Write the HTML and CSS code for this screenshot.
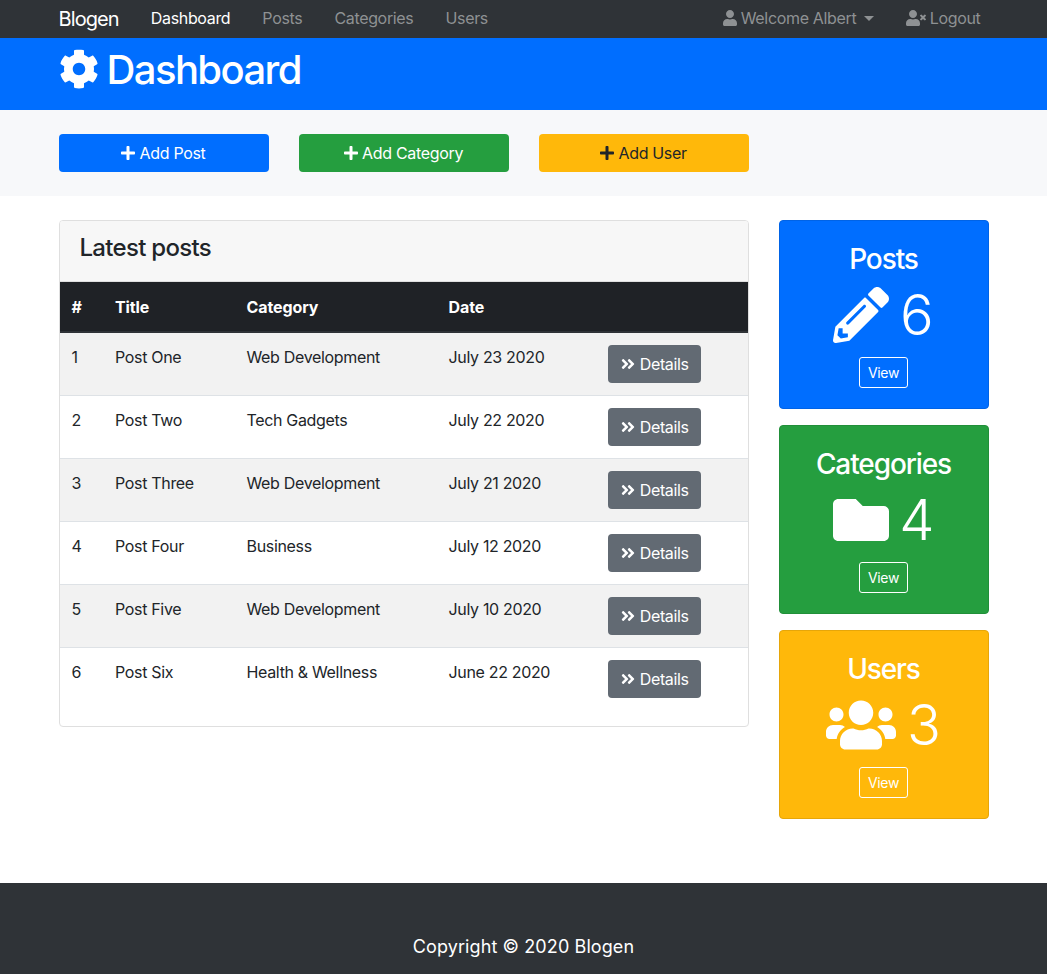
FILE: index.html
```html
<!DOCTYPE html>
<html lang="en">
<head>
  <meta charset="UTF-8">
  <meta name="viewport" content="width=device-width, initial-scale=1.0">
  <title>Blogen - Dashboard</title>
  <link rel="stylesheet" href="styles.css">
</head>
<body>
  <svg class="icon-defs" xmlns="http://www.w3.org/2000/svg">
    <symbol id="i-cog" viewBox="0 0 512 512"><path d="M487.4 315.7l-42.6-24.6c4.3-23.2 4.3-47 0-70.2l42.6-24.6c4.9-2.8 7.1-8.6 5.5-14-11.1-35.6-30-67.8-54.7-94.6-3.8-4.1-10-5.1-14.8-2.3L380.8 110c-17.9-15.4-38.5-27.3-60.8-35.1V25.8c0-5.6-3.9-10.5-9.4-11.7-36.7-8.2-74.3-7.8-109.2 0-5.5 1.2-9.4 6.1-9.4 11.7V75c-22.2 7.9-42.8 19.8-60.8 35.1L88.7 85.5c-4.9-2.8-11-1.9-14.8 2.3-24.7 26.7-43.6 58.9-54.7 94.6-1.7 5.4.6 11.2 5.5 14L67.3 221c-4.3 23.2-4.3 47 0 70.2l-42.6 24.6c-4.9 2.8-7.1 8.6-5.5 14 11.1 35.6 30 67.8 54.7 94.6 3.8 4.1 10 5.1 14.8 2.3l42.6-24.6c17.9 15.4 38.5 27.3 60.8 35.1v49.2c0 5.6 3.9 10.5 9.4 11.7 36.7 8.2 74.3 7.8 109.2 0 5.5-1.2 9.4-6.1 9.4-11.7v-49.2c22.2-7.9 42.8-19.8 60.8-35.1l42.6 24.6c4.9 2.8 11 1.9 14.8-2.3 24.7-26.7 43.6-58.9 54.7-94.6 1.5-5.5-.7-11.3-5.6-14.1zM256 336c-44.1 0-80-35.9-80-80s35.9-80 80-80 80 35.9 80 80-35.9 80-80 80z"/></symbol>
    <symbol id="i-plus" viewBox="0 0 448 512"><path d="M416 208H272V64c0-17.67-14.33-32-32-32h-32c-17.67 0-32 14.33-32 32v144H32c-17.67 0-32 14.33-32 32v32c0 17.67 14.33 32 32 32h144v144c0 17.67 14.33 32 32 32h32c17.67 0 32-14.33 32-32V304h144c17.67 0 32-14.33 32-32v-32c0-17.67-14.33-32-32-32z"/></symbol>
    <symbol id="i-user" viewBox="0 0 448 512"><path d="M224 256c70.7 0 128-57.3 128-128S294.7 0 224 0 96 57.3 96 128s57.3 128 128 128zm89.6 32h-16.7c-22.2 10.2-46.9 16-72.9 16s-50.6-5.8-72.9-16h-16.7C60.2 288 0 348.2 0 422.4V464c0 26.5 21.5 48 48 48h352c26.5 0 48-21.5 48-48v-41.6c0-74.2-60.2-134.4-134.4-134.4z"/></symbol>
    <symbol id="i-user-times" viewBox="0 0 640 512"><path d="M589.6 240l45.6-45.6c6.3-6.3 6.3-16.5 0-22.8l-22.8-22.8c-6.3-6.3-16.5-6.3-22.8 0L544 194.4l-45.6-45.6c-6.3-6.3-16.5-6.3-22.8 0l-22.8 22.8c-6.3 6.3-6.3 16.5 0 22.8l45.6 45.6-45.6 45.6c-6.3 6.3-6.3 16.5 0 22.8l22.8 22.8c6.3 6.3 16.5 6.3 22.8 0l45.6-45.6 45.6 45.6c6.3 6.3 16.5 6.3 22.8 0l22.8-22.8c6.3-6.3 6.3-16.5 0-22.8L589.6 240zM224 256c70.7 0 128-57.3 128-128S294.7 0 224 0 96 57.3 96 128s57.3 128 128 128zm89.6 32h-16.7c-22.2 10.2-46.9 16-72.9 16s-50.6-5.8-72.9-16h-16.7C60.2 288 0 348.2 0 422.4V464c0 26.5 21.5 48 48 48h352c26.5 0 48-21.5 48-48v-41.6c0-74.2-60.2-134.4-134.4-134.4z"/></symbol>
    <symbol id="i-pencil" viewBox="0 0 512 512"><path d="M497.9 142.1l-46.1 46.1c-4.7 4.7-12.3 4.7-17 0l-111-111c-4.7-4.7-4.7-12.3 0-17l46.1-46.1c18.7-18.7 49.1-18.7 67.9 0l60.1 60.1c18.8 18.7 18.8 49.1 0 67.9zM284.2 99.8L21.6 362.4.4 483.9c-2.9 16.4 11.4 30.6 27.8 27.8l121.5-21.3 262.6-262.6c4.7-4.7 4.7-12.3 0-17l-111-111c-4.8-4.7-12.4-4.7-17.1 0zM124.1 339.9c-5.5-5.5-5.5-14.3 0-19.8l154-154c5.5-5.5 14.3-5.5 19.8 0s5.5 14.3 0 19.8l-154 154c-5.5 5.5-14.3 5.5-19.8 0zM88 424h48v36.3l-64.5 11.3-31.1-31.1L51.7 376H88v48z"/></symbol>
    <symbol id="i-folder" viewBox="0 0 512 512"><path d="M464 128H272l-64-64H48C21.49 64 0 85.49 0 112v288c0 26.51 21.49 48 48 48h416c26.51 0 48-21.49 48-48V176c0-26.51-21.49-48-48-48z"/></symbol>
    <symbol id="i-users" viewBox="0 0 640 512"><path d="M96 224c35.3 0 64-28.7 64-64s-28.7-64-64-64-64 28.7-64 64 28.7 64 64 64zm448 0c35.3 0 64-28.7 64-64s-28.7-64-64-64-64 28.7-64 64 28.7 64 64 64zm32 32h-64c-17.6 0-33.5 7.1-45.1 18.6 40.3 22.1 68.9 62 75.1 109.4h66c17.7 0 32-14.3 32-32v-32c0-35.3-28.7-64-64-64zm-256 0c61.9 0 112-50.1 112-112S381.9 32 320 32 208 82.1 208 144s50.1 112 112 112zm76.8 32h-8.3c-20.8 10-43.9 16-68.5 16s-47.6-6-68.5-16h-8.3C179.6 288 128 339.6 128 403.2V432c0 26.5 21.5 48 48 48h288c26.5 0 48-21.5 48-48v-28.8c0-63.6-51.6-115.2-115.2-115.2zm-223.7-13.4C161.5 263.1 145.6 256 128 256H64c-35.3 0-64 28.7-64 64v32c0 17.7 14.3 32 32 32h65.9c6.3-47.4 34.9-87.3 75.2-109.4z"/></symbol>
    <symbol id="i-angles" viewBox="0 0 448 512"><path d="M224.3 273l-136 136c-9.4 9.4-24.6 9.4-33.9 0l-22.6-22.6c-9.4-9.4-9.4-24.6 0-33.9l96.4-96.4-96.4-96.4c-9.4-9.4-9.4-24.6 0-33.9L54.3 103c9.4-9.4 24.6-9.4 33.9 0l136 136c9.5 9.4 9.5 24.6.1 34zm192-34l-136-136c-9.4-9.4-24.6-9.4-33.9 0l-22.6 22.6c-9.4 9.4-9.4 24.6 0 33.9l96.4 96.4-96.4 96.4c-9.4 9.4-9.4 24.6 0 33.9l22.6 22.6c9.4 9.4 24.6 9.4 33.9 0l136-136c9.4-9.2 9.4-24.4 0-33.8z"/></symbol>
  </svg>

  <nav class="navbar">
    <div class="container navbar-inner">
      <a href="#" class="brand">Blogen</a>
      <ul class="nav-list">
        <li><a href="#" class="nav-link active">Dashboard</a></li>
        <li><a href="#" class="nav-link">Posts</a></li>
        <li><a href="#" class="nav-link">Categories</a></li>
        <li><a href="#" class="nav-link">Users</a></li>
      </ul>
      <ul class="nav-list nav-right">
        <li><a href="#" class="nav-link nav-welcome"><svg class="icon icon-nav-user"><use href="#i-user"/></svg> Welcome Albert <span class="caret"></span></a></li>
        <li><a href="#" class="nav-link nav-logout"><svg class="icon icon-nav-times"><use href="#i-user-times"/></svg> Logout</a></li>
      </ul>
    </div>
  </nav>

  <header class="page-header">
    <div class="container">
      <h1><svg class="icon icon-cog"><use href="#i-cog"/></svg> Dashboard</h1>
    </div>
  </header>

  <section class="actions">
    <div class="container actions-row">
      <a href="#" class="btn btn-block btn-primary"><svg class="icon icon-plus"><use href="#i-plus"/></svg> Add Post</a>
      <a href="#" class="btn btn-block btn-success"><svg class="icon icon-plus"><use href="#i-plus"/></svg> Add Category</a>
      <a href="#" class="btn btn-block btn-warning"><svg class="icon icon-plus"><use href="#i-plus"/></svg> Add User</a>
    </div>
  </section>

  <section class="main">
    <div class="container main-row">
      <div class="card posts-card">
        <div class="card-header"><h4>Latest posts</h4></div>
        <table>
          <thead>
            <tr>
              <th class="col-num">#</th>
              <th class="col-title">Title</th>
              <th class="col-category">Category</th>
              <th class="col-date">Date</th>
              <th></th>
            </tr>
          </thead>
          <tbody>
            <tr>
              <td>1</td>
              <td>Post One</td>
              <td>Web Development</td>
              <td>July 23 2020</td>
              <td><a href="#" class="btn btn-secondary"><svg class="icon icon-angles"><use href="#i-angles"/></svg> Details</a></td>
            </tr>
            <tr>
              <td>2</td>
              <td>Post Two</td>
              <td>Tech Gadgets</td>
              <td>July 22 2020</td>
              <td><a href="#" class="btn btn-secondary"><svg class="icon icon-angles"><use href="#i-angles"/></svg> Details</a></td>
            </tr>
            <tr>
              <td>3</td>
              <td>Post Three</td>
              <td>Web Development</td>
              <td>July 21 2020</td>
              <td><a href="#" class="btn btn-secondary"><svg class="icon icon-angles"><use href="#i-angles"/></svg> Details</a></td>
            </tr>
            <tr>
              <td>4</td>
              <td>Post Four</td>
              <td>Business</td>
              <td>July 12 2020</td>
              <td><a href="#" class="btn btn-secondary"><svg class="icon icon-angles"><use href="#i-angles"/></svg> Details</a></td>
            </tr>
            <tr>
              <td>5</td>
              <td>Post Five</td>
              <td>Web Development</td>
              <td>July 10 2020</td>
              <td><a href="#" class="btn btn-secondary"><svg class="icon icon-angles"><use href="#i-angles"/></svg> Details</a></td>
            </tr>
            <tr>
              <td>6</td>
              <td>Post Six</td>
              <td>Health &amp; Wellness</td>
              <td>June 22 2020</td>
              <td><a href="#" class="btn btn-secondary"><svg class="icon icon-angles"><use href="#i-angles"/></svg> Details</a></td>
            </tr>
          </tbody>
        </table>
      </div>

      <div class="stats">
        <div class="card stat-card stat-primary">
          <h3>Posts</h3>
          <div class="stat-number"><svg class="icon icon-pencil"><use href="#i-pencil"/></svg> 6</div>
          <a href="#" class="btn-view">View</a>
        </div>
        <div class="card stat-card stat-success">
          <h3>Categories</h3>
          <div class="stat-number"><svg class="icon icon-folder"><use href="#i-folder"/></svg> 4</div>
          <a href="#" class="btn-view">View</a>
        </div>
        <div class="card stat-card stat-warning">
          <h3>Users</h3>
          <div class="stat-number"><svg class="icon icon-users"><use href="#i-users"/></svg> 3</div>
          <a href="#" class="btn-view">View</a>
        </div>
      </div>
    </div>
  </section>

  <footer class="footer">
    <p>Copyright &copy; 2020 Blogen</p>
  </footer>
</body>
</html>
```

FILE: styles.css
```css
* {
  box-sizing: border-box;
}
body {
  margin: 0;
  font-family: Inter, "Liberation Sans", sans-serif;
  font-size: 16px;
  line-height: 24px;
  letter-spacing: -0.33px;
  color: #212529;
  background: #fff;
}
a {
  text-decoration: none;
}
.icon-defs {
  display: none;
}
.icon {
  fill: currentColor;
  display: inline-block;
}
.container {
  width: 960px;
  margin: 0 auto;
  padding: 0 15px;
}

/* navbar */
.navbar {
  background: #2f3337;
  height: 38px;
}
.navbar-inner {
  display: flex;
  align-items: center;
  height: 38px;
}
.brand {
  color: #fff;
  font-size: 20px;
  letter-spacing: -0.9px;
  margin-right: 16px;
  margin-top: -1px;
}
.nav-list {
  display: flex;
  list-style: none;
  margin: 0;
  padding: 0;
}
.nav-right {
  margin-left: auto;
}
.nav-link {
  display: block;
  padding: 6px 16px 8px;
  color: #8e9193;
}
.nav-link.active {
  color: #fff;
}
.nav-logout {
  padding: 6px 8px 8px 16px;
}
.caret {
  display: inline-block;
  width: 0;
  height: 0;
  margin-left: 3px;
  vertical-align: 3px;
  border-top: 5px solid currentColor;
  border-left: 5px solid transparent;
  border-right: 5px solid transparent;
}
.icon-nav-user {
  width: 14px;
  height: 16px;
  vertical-align: -2px;
}
.icon-nav-times {
  width: 20px;
  height: 16px;
  vertical-align: -2px;
}

/* page header */
.page-header {
  background: #006eff;
  color: #fff;
  height: 72px;
  padding-top: 8px;
}
.page-header h1 {
  margin: 0;
  font-size: 40px;
  font-weight: 500;
  line-height: 48px;
  letter-spacing: -1.6px;
  word-spacing: -1px;
}
.icon-cog {
  width: 40px;
  height: 40px;
  vertical-align: -5px;
}

/* action buttons */
.actions {
  background: #f7f8fa;
  padding: 24px 0;
}
.actions-row {
  display: flex;
  gap: 30px;
}
.btn {
  display: inline-block;
  height: 38px;
  padding: 7px 12px;
  border-radius: 4px;
  text-align: center;
  color: #fff;
}
.btn-block {
  width: 210px;
}
.btn-primary {
  background: #006eff;
}
.btn-success {
  background: #259e3f;
}
.btn-warning {
  background: #ffb80a;
  color: #212529;
}
.btn-secondary {
  background: #626a73;
}
.icon-plus {
  width: 14px;
  height: 16px;
  vertical-align: -2px;
}
.icon-angles {
  width: 14px;
  height: 16px;
  margin-left: 1px;
  margin-right: 1px;
  vertical-align: -2px;
}

/* main */
.main {
  padding: 24px 0 64px;
}
.main-row {
  display: flex;
  gap: 30px;
  align-items: flex-start;
}
.card {
  border: 1px solid #dfdfdf;
  border-radius: 4px;
}
.posts-card {
  width: 690px;
  padding-bottom: 15px;
  overflow: hidden;
}
.card-header {
  background: #f7f7f7;
  height: 61px;
  padding: 12px 20px;
  border-bottom: 1px solid #dfdfdf;
}
.card-header h4 {
  margin: 0;
  font-size: 24px;
  font-weight: 500;
  line-height: 30px;
  letter-spacing: -0.7px;
}
table {
  width: 100%;
  border-collapse: collapse;
  table-layout: fixed;
}
th,
td {
  padding: 12px;
  text-align: left;
  vertical-align: top;
}
th {
  background: #1f2226;
  color: #fff;
  font-weight: 700;
  height: 50px;
  padding-top: 13px;
  padding-bottom: 11px;
  letter-spacing: -0.1px;
  border-bottom: 2px solid #2f3337;
}
td {
  border-top: 1px solid #dee2e6;
  height: 63px;
}
tbody tr:first-child td {
  border-top: none;
}
tbody tr:nth-child(odd) {
  background: #f2f2f2;
}
.col-num {
  width: 43.5px;
}
.col-title {
  width: 131.5px;
}
.col-category {
  width: 202px;
}
.col-date {
  width: 159px;
}

/* stat cards */
.stats {
  width: 210px;
  display: flex;
  flex-direction: column;
  gap: 16px;
}
.stat-card {
  height: 189px;
  padding: 20px;
  text-align: center;
  color: #fff;
}
.stat-primary {
  background: #006eff;
  border-color: #0063e6;
}
.stat-success {
  background: #259e3f;
  border-color: #218f39;
}
.stat-warning {
  background: #ffb80a;
  border-color: #e6a609;
}
.stat-card h3 {
  margin: 0 0 6px;
  padding-top: 2px;
  font-size: 28px;
  font-weight: 500;
  line-height: 33px;
  letter-spacing: -1.1px;
}
.stat-number {
  font-size: 56px;
  font-weight: 300;
  line-height: 67px;
  letter-spacing: 0;
  word-spacing: -5px;
  margin-bottom: 8px;
  white-space: nowrap;
}
.icon-pencil,
.icon-folder {
  width: 56px;
  height: 56px;
  vertical-align: -8px;
}
.icon-users {
  width: 70px;
  height: 56px;
  vertical-align: -8px;
}
.btn-view {
  display: inline-block;
  height: 31px;
  padding: 4px 8px;
  font-size: 14px;
  line-height: 21px;
  color: #fff;
  border: 1px solid #fff;
  border-radius: 3px;
}

/* footer */
.footer {
  background: #2f3337;
  color: #fff;
  height: 91px;
  padding-top: 52px;
  text-align: center;
  font-size: 18px;
  letter-spacing: 0.1px;
}
.footer p {
  margin: 0;
}
```
